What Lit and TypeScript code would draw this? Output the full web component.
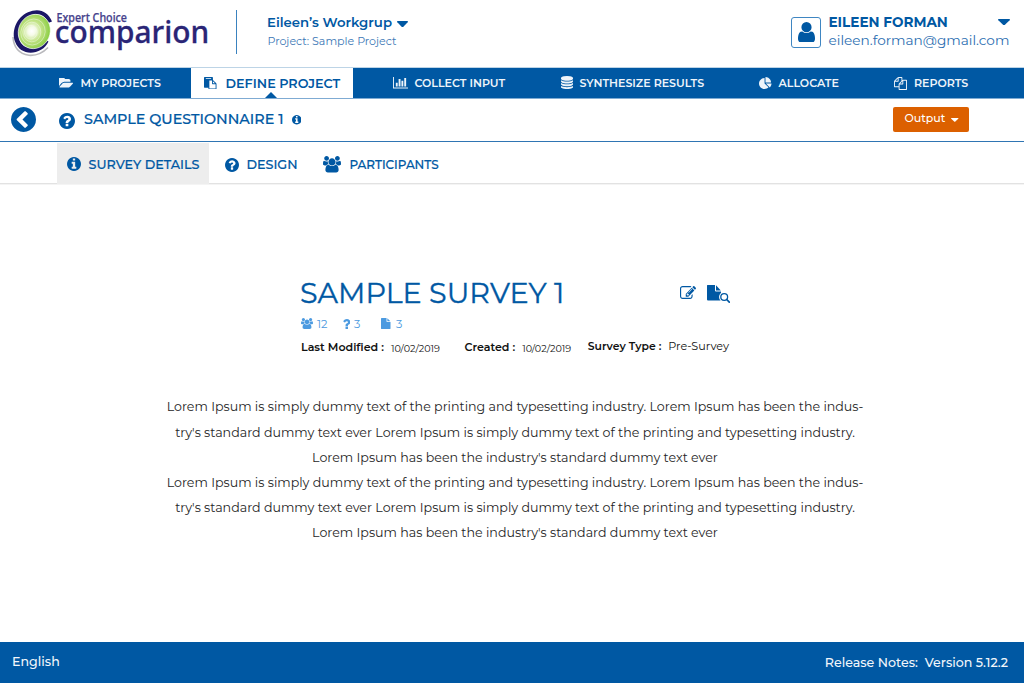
import { LitElement, html, css, svg } from 'lit';
import { customElement, property } from 'lit/decorators.js';

const DISC = 'm0 0q0 209-103 385.5t-279.500 279.500-385.500 103-385.500-103-279.500-279.500-103-385.500 103-385.500 279.500-279.500 385.500-103 385.500 103 279.500 279.500 103 385.500z';

// Each glyph: [viewBox cropped to the ink, path data]
const GLYPHS: Record<string, [string, string]> = {
  folder: ['0 256 1879 1280', 'M1879 952q0 31-31 66l-336 396q-43 51-120.500 86.500t-143.500 35.500h-1088q-34 0-60.500-13t-26.500-43q0-31 31-66l336-396q43-51 120.500-86.500t143.500-35.500h1088q34 0 60.500 13t26.500 43zm-343-344v160h-832q-94 0-197 47.500t-164 119.500l-337 396-5 6q0-4-.5-12.500t-.5-12.500v-960q0-92 66-158t158-66h320q92 0 158 66t66 158v32h544q92 0 158 66t66 158z'],
  help: ['128 128 1536 1536', 'M1024 1376v-192q0-14-9-23t-23-9h-192q-14 0-23 9t-9 23v192q0 14 9 23t23 9h192q14 0 23-9t9-23zm256-672q0-88-55.500-163t-138.500-116-170-41q-243 0-371 213-15 24 8 42l132 100q7 6 19 6 16 0 25-12 53-68 86-92 34-24 86-24 48 0 85.500 26t37.500 59q0 38-20 61t-68 45q-63 28-115.500 86.500t-52.500 125.500v36q0 14 9 23t23 9h192q14 0 23-9t9-23q0-19 21.500-49.500t54.500-49.500q32-18 49-28.500t46-35 44.500-48 28-60.500 12.500-81zM1664 896' + DISC],
  info: ['128 128 1536 1536', 'M1152 1376v-160q0-14-9-23t-23-9h-96v-512q0-14-9-23t-23-9h-320q-14 0-23 9t-9 23v160q0 14 9 23t23 9h96v320h-96q-14 0-23 9t-9 23v160q0 14 9 23t23 9h448q14 0 23-9t9-23zm-128-896v-160q0-14-9-23t-23-9h-192q-14 0-23 9t-9 23v160q0 14 9 23t23 9h192q14 0 23-9t9-23zM1664 896' + DISC],
  back: ['128 128 1536 1536', 'M1037 1395l102-102q19-19 19-45t-19-45l-307-307 307-307q19-19 19-45t-19-45l-102-102q-19-19-45-19t-45 19l-454 454q-19 19-19 45t19 45l454 454q19 19 45 19t45-19zM1664 896' + DISC],
  bars: ['0 128 2048 1536', 'M640 896v512h-256v-512h256zm384-512v1024h-256v-1024h256zm1024 1152v128h-2048v-1536h128v1408h1920zm-640-896v768h-256v-768h256zm384-384v1152h-256v-1152h256z'],
  database: ['128 0 1536 1792', 'M896 768q237 0 443-43t325-127v170q0 69-103 128t-280 93.500-385 34.500-385-34.500-280-93.500-103-128v-170q119 84 325 127t443 43zm0 768q237 0 443-43t325-127v170q0 69-103 128t-280 93.500-385 34.500-385-34.500-280-93.500-103-128v-170q119 84 325 127t443 43zm0-384q237 0 443-43t325-127v170q0 69-103 128t-280 93.500-385 34.500-385-34.500-280-93.500-103-128v-170q119 84 325 127t443 43zm0-1152q208 0 385 34.500t280 93.500 103 128v128q0 69-103 128t-280 93.500-385 34.500-385-34.500-280-93.500-103-128v-128q0-69 103-128t280-93.500 385-34.500z'],
  pie: ['0 0 1728 1664', 'M768 890l546 546q-106 108-247.500 168t-298.500 60q-209 0-385.500-103t-279.500-279.500-103-385.500 103-385.500 279.500-279.500 385.500-103v762zm187 6h773q0 157-60 298.500t-168 247.500zm709-128h-768v-768q209 0 385.500 103t279.500 279.500 103 385.500z'],
  copy: ['0 0 1792 1792', 'M1696 384q40 0 68 28t28 68v1216q0 40-28 68t-68 28h-960q-40 0-68-28t-28-68v-288h-544q-40 0-68-28t-28-68v-672q0-40 20-88t48-76l408-408q28-28 76-48t88-20h416q40 0 68 28t28 68v328q68-40 128-40h416zm-544 213l-299 299h299v-299zm-640-384l-299 299h299v-299zm196 647l316-316v-416h-384v416q0 40-28 68t-68 28h-416v640h512v-256q0-40 20-88t48-76zm956 804v-1152h-384v416q0 40-28 68t-68 28h-416v640h896z'],
  paste: ['0 0 1792 1792', 'M768 1664h896v-640h-416q-40 0-68-28t-28-68v-416h-384v1152zm256-1440v-64q0-13-9.500-22.500t-22.500-9.500h-704q-13 0-22.500 9.500t-9.500 22.500v64q0 13 9.500 22.500t22.500 9.500h704q13 0 22.500-9.500t9.500-22.500zm256 672h299l-299-299v299zm512 128v672q0 40-28 68t-68 28h-960q-40 0-68-28t-28-68v-160h-544q-40 0-68-28t-28-68v-1344q0-40 28-68t68-28h1088q40 0 68 28t28 68v328q21 13 36 28l408 408q28 28 48 76t20 88z'],
  users: ['0 0 1920 1792', 'M593 896q-162 5-265 128h-134q-82 0-138-40.500t-56-118.500q0-353 124-353 6 0 43.500 21t97.500 42.500 119 21.500q67 0 133-23-5 37-5 66 0 139 81 256zm1071 637q0 120-73 189.500t-194 69.500h-874q-121 0-194-69.500t-73-189.500q0-53 3.500-103.500t14-109 26.500-108.500 43-97.500 62-81 85.500-53.500 111.500-20q10 0 43 21.500t73 48 107 48 135 21.500 135-21.500 107-48 73-48 43-21.500q61 0 111.500 20t85.500 53.500 62 81 43 97.500 26.500 108.500 14 109 3.500 103.500zm-1024-1277q0 106-75 181t-181 75-181-75-75-181 75-181 181-75 181 75 75 181zm704 384q0 159-112.500 271.500t-271.500 112.500-271.500-112.500-112.500-271.500 112.500-271.500 271.500-112.500 271.500 112.500 112.500 271.500zm576 225q0 78-56 118.500t-138 40.500h-134q-103-123-265-128 81-117 81-256 0-29-5-66 66 23 133 23 59 0 119-21.500t97.500-42.500 43.500-21q124 0 124 353zm-128-609q0 106-75 181t-181 75-181-75-75-181 75-181 181-75 181 75 75 181z'],
  question: ['448 256 960 1280', 'M1088 1256v240q0 16-12 28t-28 12h-240q-16 0-28-12t-12-28v-240q0-16 12-28t28-12h240q16 0 28 12t12 28zm316-600q0 54-15.500 101t-35 76.500-55 59.500-57.500 43.500-61 35.500q-41 23-68.500 65t-27.500 67q0 17-12 32.500t-28 15.500h-240q-15 0-25.500-18.500t-10.500-37.500v-45q0-83 65-156.500t143-108.500q59-27 84-56t25-76q0-42-46.500-74t-107.500-32q-65 0-108 29-35 25-107 115-13 16-31 16-12 0-25-8l-164-125q-13-10-15.500-25t5.500-28q160-266 464-266 80 0 161 31t146 83 106 127.500 41 158.500z'],
  file: ['128 0 1536 1792', 'M1152 512v-472q22 14 36 28l408 408q14 14 28 36h-472zm-128 32q0 40 28 68t68 28h544v1056q0 40-28 68t-68 28h-1344q-40 0-68-28t-28-68v-1600q0-40 28-68t68-28h800v544z'],
  edit: ['0 128 1784 1408', 'M888 1184l116-116-152-152-116 116v56h96v96h56zm440-720q-16-16-33 1l-350 350q-17 17-1 33t33-1l350-350q17-17 1-33zm80 594v190q0 119-84.500 203.500t-203.500 84.500h-832q-119 0-203.500-84.500t-84.500-203.500v-832q0-119 84.500-203.500t203.500-84.500h832q63 0 117 25 15 7 18 23 3 17-9 29l-49 49q-14 14-32 8-23-6-45-6h-832q-66 0-113 47t-47 113v832q0 66 47 113t113 47h832q66 0 113-47t47-113v-126q0-13 9-22l64-64q15-15 35-7t20 29zm-96-738l288 288-672 672h-288v-288zm444 132l-92 92-288-288 92-92q28-28 68-28t68 28l152 152q28 28 28 68t-28 68z'],
  user: ['256 128 1280 1536', 'M1536 1399q0 109-62.500 187t-150.500 78h-854q-88 0-150.500-78t-62.500-187q0-85 8.500-160.500t31.500-152 58.500-131 94-89 134.500-34.500q131 128 313 128t313-128q76 0 134.500 34.500t94 89 58.500 131 31.500 152 8.500 160.500zm-256-887q0 159-112.500 271.500t-271.500 112.500-271.500-112.500-112.500-271.500 112.500-271.500 271.500-112.500 271.500 112.500 112.500 271.500z'],
  caret: ['0 0 100 60', 'M6 0H94q10 3 3 11L58 54q-8 8-16 0L3 11q-7-8 3-11z'],
};

@customElement('ui-icon')
export class UiIcon extends LitElement {
  @property() name = 'info';
  static styles = css`
    :host { display: block; flex: none; }
    svg { display: block; width: 100%; height: 100%; fill: currentColor; }
  `;
  render() {
    const [box, d] = GLYPHS[this.name];
    return html`<svg viewBox=${box} preserveAspectRatio="none">${svg`<path d=${d}></path>`}</svg>`;
  }
}

@customElement('brand-logo')
export class BrandLogo extends LitElement {
  static styles = css`
    :host { display: block; }
    svg { display: block; }
    .name { font-family: "Noto Sans", "Open Sans", sans-serif; fill: #2a2576; }
    .small { font-size: 11.800px; font-weight: 500; fill: #45418c; stroke: #45418c; stroke-width: .25; }
    .large { font-size: 31px; font-weight: 500; stroke: #2a2576; stroke-width: .3; }
  `;
  render() {
    return html`<svg width="212" height="58" viewBox="10 4 212 58">
      <defs>
        <radialGradient id="green" cx="42%" cy="52%" r="60%">
          <stop offset="0" stop-color="#ffffff" />
          <stop offset=".2" stop-color="#f6fbe9" />
          <stop offset=".5" stop-color="#c3e487" />
          <stop offset="1" stop-color="#84cb3c" />
        </radialGradient>
      </defs>
      <path d="M48 47.500Q40 56 29 55.300Q14 53 13 37" fill="none" stroke="#b9b9bd" stroke-width="1.600" />
      <path d="M52 21.500C48 11 38.500 7.500 28 12.200C16.500 17.500 11 31 15.200 42C19 52.500 31 55.500 41 49.800C44.500 47.800 46.800 45 48.500 41.500L45.500 40C36 50 23 50 19.500 40C16.500 30 23 17.500 33 14.800C40 13.200 45.500 16 48 23Z" fill="#1b1766" />
      <ellipse cx="34.300" cy="31.500" rx="15.800" ry="17.400" transform="rotate(24 34.300 31.500)" fill="url(#green)" stroke="#fff" stroke-width=".6" />
      <g fill="none" stroke="#fff" stroke-width=".7" opacity=".55">
        <ellipse cx="33" cy="32" rx="12" ry="13.200" transform="rotate(24 33 32)" />
        <ellipse cx="31.800" cy="32" rx="9" ry="9.800" />
        <ellipse cx="30.800" cy="32.300" rx="6.300" ry="6.800" />
      </g>
      <text class="name small" x="56.500" y="22.300" textLength="70.500" lengthAdjust="spacingAndGlyphs">Expert Choice</text>
      <text class="name large" x="54.800" y="43.300" textLength="154.400" lengthAdjust="spacingAndGlyphs">comparion</text>
    </svg>`;
  }
}

@customElement('app-root')
export class AppRoot extends LitElement {
  static styles = css`
    :host {
      --blue: #0058a3;
      display: flex;
      flex-direction: column;
      height: 683px;
      background: #fff;
      color: var(--blue);
      font-family: Montserrat, Inter, sans-serif;
      white-space: nowrap;
      overflow: hidden;
    }
    * { box-sizing: border-box; }
    p, h1, h2 { margin: 0; font-weight: inherit; }

    header { display: flex; height: 68px; border-bottom: 1px solid #bdd4e6; flex: none; }
    .logo { margin: 4px 0 0 10px; }
    .rule { width: 1px; height: 44px; margin: 10px 0 0 14px; background: #3a82bf; }
    .group { margin: 12px 0 0 30px; }
    .group-name { display: flex; align-items: center; height: 20px; font-size: 13.260px; font-weight: 600; }
    .group-name ui-icon { width: 11px; height: 6.500px; margin: 4px 0 0 5px; }
    .project { height: 18px; line-height: 18px; font-size: 11.050px; color: #3d78b6; margin-left: .5px; }
    .account { display: flex; margin: 0 15px 0 auto; }
    .avatar { width: 30px; height: 31px; margin-top: 17px; border: 1px solid #3f86c2; border-radius: 3px; padding: 3.500px 0 0 5.500px; }
    .avatar ui-icon { width: 17px; height: 20.500px; }
    .who { margin: 12px 0 0 7.500px; width: 180.500px; }
    .person { display: flex; align-items: center; justify-content: space-between; height: 20px; font-size: 13.600px; font-weight: 700; }
    .person ui-icon { width: 12px; height: 6.500px; margin: 0 -1px 0 0; }
    .mail { height: 16px; line-height: 16px; font-size: 13.650px; color: #2c6eb1; }

    nav { display: grid; grid-template-columns: 191px 162px 207px 199px 135px 130px; height: 31px; flex: none;
      background: var(--blue); border-bottom: 1px solid #7fabd3; color: #eef4fa; font-size: 11.060px; font-weight: 600; }
    .nav-item { display: flex; align-items: center; }
    .nav-item.first { padding-left: 59px; }
    .nav-item.collect { padding-left: 40px; }
    .folder { width: 14px; height: 9.500px; margin-right: 7.500px; }
    .bars { width: 15px; height: 11.500px; margin-right: 6.500px; }
    .db { width: 12px; height: 13px; margin: -2px 7px 0 .5px; }
    .pie { width: 12.500px; height: 12px; margin-right: 7px; }
    .copy { width: 13px; height: 13px; margin-right: 7px; }
    .nav-item.active { position: relative; background: #fff; color: var(--blue); font-size: 12.780px; padding-left: 13px; }
    .nav-item.active::after { content: ""; position: absolute; left: 74px; bottom: 0; border: 6.500px solid transparent; border-top: 0; border-bottom-color: var(--blue); }
    .paste { width: 12.500px; height: 12.500px; margin-right: 9px; }

    .bar { display: flex; align-items: center; height: 43px; flex: none; border-bottom: 1px solid #2f75b3; padding: 0 55px 0 11px; }
    .back { width: 25px; height: 25px; margin-top: -1px; }
    .bar .help { width: 16px; height: 16px; margin: 2px 9px 0 23px; }
    .bar h2 { font-size: 14.350px; font-weight: 500; margin-top: -2px; -webkit-text-stroke: .2px currentColor; }
    .bar .info { width: 9.500px; height: 9.500px; margin: 0 0 0 8.500px; }
    .output { display: flex; align-items: center; width: 76px; height: 25px; margin: -1px 0 0 auto; padding: 0 0 3px 11.500px; background: #dc6000; border-radius: 2px; color: #fff; font-size: 11.050px; font-weight: 500; }
    .output ui-icon { width: 7.500px; height: 4px; margin: 3px 0 0 6px; }

    .tabs { display: flex; height: 42px; flex: none; padding-left: 57px; border-bottom: 1px solid #e2e2e2; box-shadow: 0 1px 0 #f4f4f4; font-weight: 500; -webkit-text-stroke: .2px currentColor; }
    .tab { display: flex; align-items: center; font-size: 12.720px; padding-top: 4px; }
    .tab.on { width: 152px; padding-left: 9.500px; margin: 1px 0 -1px; padding-top: 1px; background: #ededed; }
    .tab .dot { width: 14px; height: 14px; margin-right: 8px; }
    .tab.design { padding-left: 15.500px; width: 114px; }
    .tab.people { font-size: 11.940px; }
    .tab .users { width: 18px; height: 16.500px; margin-right: 8.500px; }

    main { flex: 1; padding-top: 91px; color: #1c1c1c; }
    .survey { width: 429px; margin-left: 301px; }
    .title { display: flex; height: 36px; color: var(--blue); align-items: center; }
    .title h1 { font-size: 28.600px; font-weight: 400; margin-left: -1px; line-height: 36px; flex: 1; -webkit-text-stroke: .35px currentColor; }
    .title .edit { width: 16px; height: 13px; margin: -1px 11px 0 0; }
    .preview { display: grid; width: 23px; height: 20px; margin-top: 1px; }
    .preview svg { display: block; }
    .counts { display: flex; align-items: center; height: 26px; color: #4c9ae0; font-size: 11.300px; }
    .counts ui-icon { margin-top: -2px; }
    .counts .users { width: 12px; height: 11px; margin-right: 4px; }
    .counts .q { width: 7.500px; height: 10px; margin: -1px 4px 0 15px; }
    .counts .file { width: 9.500px; height: 11px; margin: -2px 5px 0 21px; }
    .facts { display: flex; height: 20px; align-items: center; font-size: 11.080px; color: #111; }
    .facts b { font-weight: 600; }
    .facts .date { font-size: 9.650px; padding-top: 2px; margin-left: 7px; }
    .facts .made { margin-left: 24.500px; }
    .facts .kind { margin: -2px 0 0 16.500px; font-size: 10.850px; }
    .facts .type { margin: -2px 0 0 7px; font-size: 11.180px; }
    .copytext { width: 700px; margin: 37.300px 0 0 165px; font-size: 12.630px; line-height: 25.200px; text-align: center; color: #262626; }

    footer { display: flex; align-items: center; justify-content: space-between; height: 41px; flex: none; padding: 0 16px 1px 12px; background: var(--blue); color: #f2f6fb; font-size: 12.640px; font-weight: 500; white-space: pre; }
    .lang { margin-top: -2px; }
  `;

  render() {
    const paragraph = html`<p>Lorem Ipsum is simply dummy text of the printing and typesetting industry. Lorem Ipsum has been the indus-<br>try's standard dummy text ever Lorem Ipsum is simply dummy text of the printing and typesetting industry.<br>Lorem Ipsum has been the industry's standard dummy text ever</p>`;
    return html`
      <header>
        <brand-logo class="logo"></brand-logo>
        <div class="rule"></div>
        <div class="group">
          <div class="group-name">Eileen’s Workgrup<ui-icon name="caret"></ui-icon></div>
          <div class="project">Project: Sample Project</div>
        </div>
        <div class="account">
          <div class="avatar"><ui-icon name="user"></ui-icon></div>
          <div class="who">
            <div class="person">EILEEN FORMAN<ui-icon name="caret"></ui-icon></div>
            <div class="mail">eileen.forman@gmail.com</div>
          </div>
        </div>
      </header>
      <nav>
        <div class="nav-item first"><ui-icon class="folder" name="folder"></ui-icon>MY PROJECTS</div>
        <div class="nav-item active"><ui-icon class="paste" name="paste"></ui-icon>DEFINE PROJECT</div>
        <div class="nav-item collect"><ui-icon class="bars" name="bars"></ui-icon>COLLECT INPUT</div>
        <div class="nav-item"><ui-icon class="db" name="database"></ui-icon>SYNTHESIZE RESULTS</div>
        <div class="nav-item"><ui-icon class="pie" name="pie"></ui-icon>ALLOCATE</div>
        <div class="nav-item"><ui-icon class="copy" name="copy"></ui-icon>REPORTS</div>
      </nav>
      <section class="bar">
        <ui-icon class="back" name="back"></ui-icon>
        <ui-icon class="help" name="help"></ui-icon>
        <h2>SAMPLE QUESTIONNAIRE 1</h2>
        <ui-icon class="info" name="info"></ui-icon>
        <div class="output">Output<ui-icon name="caret"></ui-icon></div>
      </section>
      <section class="tabs">
        <div class="tab on"><ui-icon class="dot" name="info"></ui-icon>SURVEY DETAILS</div>
        <div class="tab design"><ui-icon class="dot" name="help"></ui-icon>DESIGN</div>
        <div class="tab people"><ui-icon class="users" name="users"></ui-icon>PARTICIPANTS</div>
      </section>
      <main>
        <div class="survey">
          <div class="title">
            <h1>SAMPLE SURVEY 1</h1>
            <ui-icon class="edit" name="edit"></ui-icon>
            <div class="preview">
              <svg width="23" height="20" viewBox="0 0 23 20">
                <path d="M.5 1H8V6.500Q8 7.500 9 7.500H14V16.500H1Q0 16.500 0 15.500V1.500Q0 1 .5 1ZM9 1.200L13.800 6.500H9Z" fill="#0058a3" />
                <circle cx="17.200" cy="13" r="3.400" fill="#fff" stroke="#fff" stroke-width="3.500" />
                <circle cx="17.200" cy="13" r="3.400" fill="#fff" stroke="#0058a3" stroke-width="1.300" />
                <path d="M19.700 15.500L22.300 18.200" stroke="#0058a3" stroke-width="1.700" stroke-linecap="round" />
              </svg>
            </div>
          </div>
          <div class="counts">
            <ui-icon class="users" name="users"></ui-icon>12
            <ui-icon class="q" name="question"></ui-icon>3
            <ui-icon class="file" name="file"></ui-icon>3
          </div>
          <div class="facts">
            <b>Last Modified :</b><span class="date">10/02/2019</span>
            <b class="made">Created :</b><span class="date">10/02/2019</span>
            <b class="kind">Survey Type :</b><span class="type">Pre-Survey</span>
          </div>
        </div>
        <div class="copytext">${paragraph}${paragraph}</div>
      </main>
      <footer><span class="lang">English</span><span>Release Notes:  Version 5.12.2</span></footer>
    `;
  }
}
